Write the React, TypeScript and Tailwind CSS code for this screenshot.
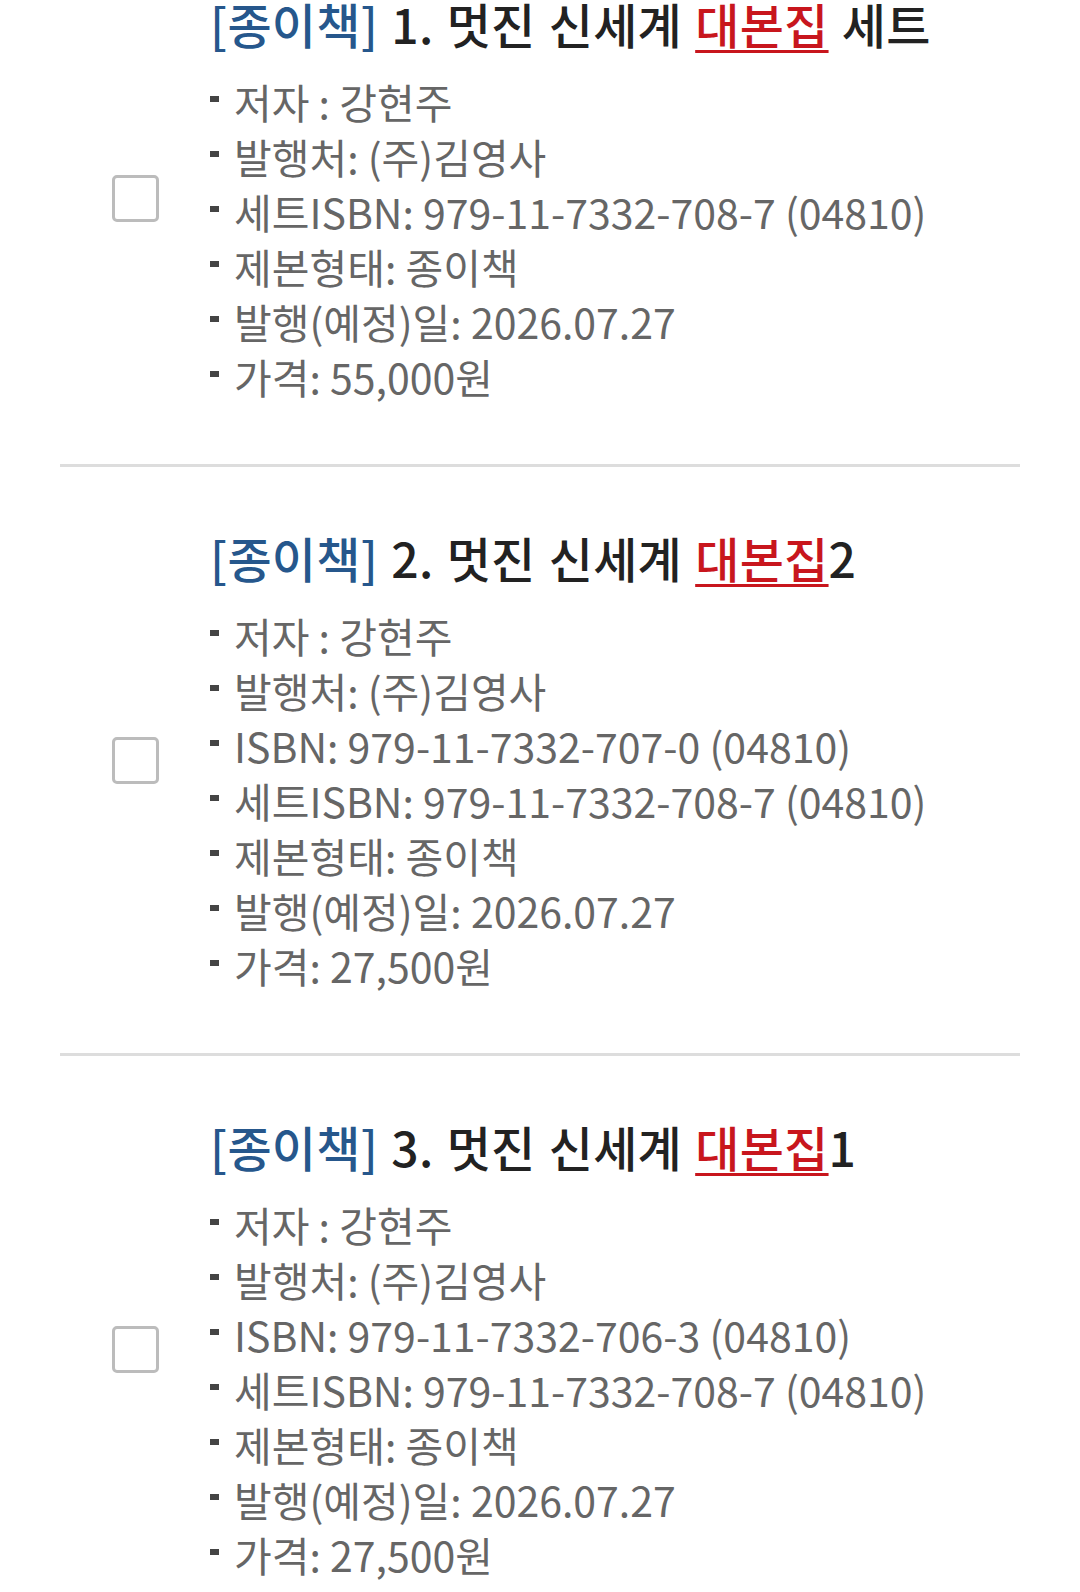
import React from "react";

type Book = {
  no: string;
  suffix: string;
  spaced: boolean;
  details: string[];
};

const books: Book[] = [
  {
    no: "1.",
    suffix: "세트",
    spaced: true,
    details: [
      "저자 : 강현주",
      "발행처: (주)김영사",
      "세트ISBN: 979-11-7332-708-7 (04810)",
      "제본형태: 종이책",
      "발행(예정)일: 2026.07.27",
      "가격: 55,000원",
    ],
  },
  {
    no: "2.",
    suffix: "2",
    spaced: false,
    details: [
      "저자 : 강현주",
      "발행처: (주)김영사",
      "ISBN: 979-11-7332-707-0 (04810)",
      "세트ISBN: 979-11-7332-708-7 (04810)",
      "제본형태: 종이책",
      "발행(예정)일: 2026.07.27",
      "가격: 27,500원",
    ],
  },
  {
    no: "3.",
    suffix: "1",
    spaced: false,
    details: [
      "저자 : 강현주",
      "발행처: (주)김영사",
      "ISBN: 979-11-7332-706-3 (04810)",
      "세트ISBN: 979-11-7332-708-7 (04810)",
      "제본형태: 종이책",
      "발행(예정)일: 2026.07.27",
      "가격: 27,500원",
    ],
  },
];

function Item({ book }: { book: Book }) {
  return (
    <div className="flex items-center border-b-[3px] border-[#dddddd] py-[60px]">
      <div className="flex w-[150px] shrink-0 justify-center">
        <span className="block h-[47px] w-[47px] rounded-[5px] border-[3px] border-[#bcbcbc] bg-white" />
      </div>
      <div className="flex-1">
        <div className="text-[48px] font-medium leading-[60px] tracking-[0.3px] text-[#222222] whitespace-nowrap [word-spacing:2px]">
          <span className="text-[#26578c]">[종이책]</span> {book.no} 멋진 신세계{" "}
          <span className="text-[#c8161d] underline decoration-[#c8161d] decoration-[3px] underline-offset-[6px]">
            대본집
          </span>
          {book.spaced ? " " : ""}
          {book.suffix}
        </div>
        <ul className="mt-[21px]">
          {book.details.map((d) => (
            <li
              key={d}
              className="flex items-center text-[41px] font-normal leading-[55px] text-[#666666] whitespace-nowrap"
            >
              <span className="mr-[15px] block h-[6px] w-[9px] shrink-0 -translate-y-[3px] bg-[#444444]" />
              <span>{d}</span>
            </li>
          ))}
        </ul>
      </div>
    </div>
  );
}

export default function App() {
  return (
    <div className="h-[1592px] w-full overflow-hidden bg-white font-['Noto_Sans_CJK_KR','Noto_Sans',sans-serif]">
      <div className="-mt-[67px] px-[60px]">
        {books.map((b) => (
          <Item key={b.no} book={b} />
        ))}
      </div>
    </div>
  );
}
